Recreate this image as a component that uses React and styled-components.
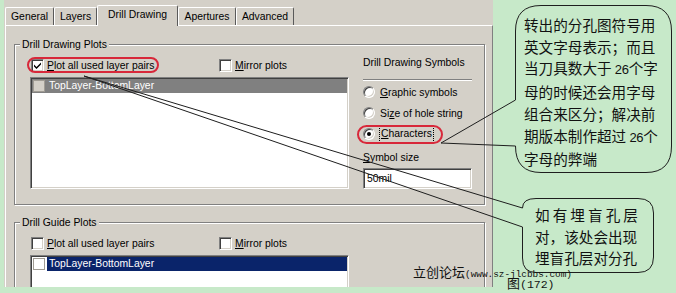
import React from 'react';
import styled, { createGlobalStyle } from 'styled-components';

const UI = `'Liberation Sans', Arial, sans-serif`;
const CJK = `'Noto Sans CJK SC', 'Noto Sans', sans-serif`;
const MONO = `'Liberation Mono', 'DejaVu Sans Mono', monospace`;

const Global = createGlobalStyle`
  html, body { margin: 0; padding: 0; background: #c7e9c9; }
  body { width: 676px; height: 293px; overflow: hidden; }
`;

const Stage = styled.div`
  position: relative;
  width: 676px;
  height: 293px;
  overflow: hidden;
  background: #c7e9c9;
  font-family: ${UI};
  font-size: 10.4px;
  color: #000;
`;

const Dialog = styled.div`
  margin-left: 4px;
  width: 489px;
  height: 287px;
  background: #d4d0c8;
  display: flex;
  flex-direction: column;
  overflow: hidden;
`;

const TabStrip = styled.div`
  display: flex;
  align-items: flex-end;
  height: 25px;
  padding-left: 1px;
  position: relative;
  z-index: 1;
  flex-shrink: 0;
`;

const Tab = styled.div`
  box-sizing: border-box;
  width: ${(p) => p.$w}px;
  height: ${(p) => (p.$active ? 21 : 18)}px;
  margin-bottom: ${(p) => (p.$active ? -1 : 0)}px;
  border-top: 1px solid #fff;
  border-left: 1px solid #fff;
  border-right: 1px solid #5a5a5a;
  border-radius: 2px 2px 0 0;
  background: #d4d0c8;
  display: flex;
  align-items: center;
  justify-content: center;
  padding-bottom: ${(p) => (p.$active ? 3 : 0)}px;
  white-space: nowrap;
`;

const TabBody = styled.div`
  flex: 1;
  margin-left: 1px;
  border-top: 1px solid #fff;
  border-left: 1px solid #fff;
  border-right: 1px solid #808080;
  padding: 18px 7px 0 8px;
`;

const Group = styled.div`
  position: relative;
  box-sizing: border-box;
  height: ${(p) => p.$h}px;
  margin-top: ${(p) => p.$mt || 0}px;
  border: 1px solid #808080;
  box-shadow: inset 1px 1px 0 #fff, 1px 1px 0 #fff;
  display: flex;
  align-items: flex-start;
  padding: 14px 0 0 15px;
`;

const Legend = styled.span`
  position: absolute;
  top: -7px;
  left: 5px;
  padding: 0 2px;
  line-height: 13px;
  background: #d4d0c8;
`;

const LeftCol = styled.div`
  width: 319px;
  display: flex;
  flex-direction: column;
`;

const CheckRow = styled.div`
  display: grid;
  grid-template-columns: 188px auto;
  height: 13px;
  margin-left: 1px;
`;

const CheckItem = styled.label`
  display: flex;
  align-items: center;
  gap: 3px;
  line-height: 13px;
  white-space: nowrap;
`;

const CheckBox = styled.span`
  box-sizing: border-box;
  width: 13px;
  height: 13px;
  flex-shrink: 0;
  background: #fff;
  border-style: solid;
  border-width: 1px;
  border-color: #808080 #fff #fff #808080;
  box-shadow: inset 1px 1px 0 #404040, inset -1px -1px 0 #d4d0c8;
  display: flex;
  align-items: center;
  justify-content: center;
`;

const Key = styled.span`
  text-decoration: underline;
  text-underline-offset: 1px;
`;

const ListBox = styled.div`
  box-sizing: border-box;
  height: ${(p) => p.$h}px;
  margin-top: 5px;
  background: #fff;
  border-style: solid;
  border-width: 1px;
  border-color: #808080 #fff #fff #808080;
  box-shadow: inset 1px 1px 0 #404040, inset -1px -1px 0 #d4d0c8;
  padding: 1px;
`;

const ListRow = styled.div`
  display: flex;
  align-items: center;
  height: 14px;
  background: ${(p) => (p.$full ? '#808080' : 'transparent')};
  padding-left: 1px;
`;

const ItemCheck = styled.span`
  box-sizing: border-box;
  width: 12px;
  height: 12px;
  flex-shrink: 0;
  border: 1px solid #a09c94;
  background: ${(p) => (p.$grey ? '#d4d0c8' : '#fff')};
`;

const ItemText = styled.span`
  flex: 1;
  height: 14px;
  line-height: 14px;
  margin-left: 2px;
  padding-left: 2px;
  color: #fff;
  background: ${(p) => p.$bg};
  white-space: nowrap;
`;

const RightCol = styled.div`
  width: 109px;
  margin-left: 14px;
  margin-top: -3px;
  display: flex;
  flex-direction: column;
`;

const ColTitle = styled.div`
  line-height: 13px;
  white-space: nowrap;
`;

const Separator = styled.div`
  height: 1px;
  margin-top: 10px;
  background: #808080;
  border-bottom: 1px solid #fff;
`;

const RadioList = styled.div`
  display: flex;
  flex-direction: column;
  gap: 5px;
  margin-top: 3px;
`;

const RadioItem = styled.label`
  display: flex;
  align-items: center;
  gap: 5px;
  height: 16px;
  white-space: nowrap;
`;

const Radio = styled.span`
  position: relative;
  box-sizing: border-box;
  width: 12px;
  height: 12px;
  flex-shrink: 0;
  border-radius: 50%;
  background: #fff;
  border-style: solid;
  border-width: 1px;
  border-color: #808080 #fff #fff #808080;
  box-shadow: inset 1px 1px 0 #404040, inset -1px -1px 0 #d4d0c8;
  &::after {
    content: '';
    display: ${(p) => (p.$on ? 'block' : 'none')};
    position: absolute;
    left: 3px;
    top: 3px;
    width: 4px;
    height: 4px;
    border-radius: 50%;
    background: #000;
  }
`;

const Focus = styled.span`
  margin-left: -1px;
  padding: 1px 1px 2px;
  border: 1px dotted #000;
  line-height: 12px;
`;

const FieldLabel = styled.div`
  margin-top: 9px;
  line-height: 13px;
`;

const TextInput = styled.div`
  box-sizing: border-box;
  height: 21px;
  margin-top: 4px;
  background: #fff;
  border-style: solid;
  border-width: 1px;
  border-color: #808080 #fff #fff #808080;
  box-shadow: inset 1px 1px 0 #404040, inset -1px -1px 0 #d4d0c8;
  padding: 0 3px;
  display: flex;
  align-items: center;
`;

const Overlay = styled.svg`
  position: absolute;
  left: 0;
  top: 0;
  pointer-events: none;
`;

const BubbleText = styled.div`
  position: absolute;
  left: ${(p) => p.$x}px;
  top: ${(p) => p.$y}px;
  width: ${(p) => p.$w}px;
  font-family: ${CJK};
  font-size: 14.6px;
  line-height: 21.7px;
  color: #111;
  white-space: nowrap;
`;

const Num = styled.span`
  font-family: ${UI};
  font-size: 13px;
  letter-spacing: -0.3px;
`;

const SpreadLine = styled.div`
  display: flex;
  justify-content: space-between;
`;

const Caption = styled.div`
  position: absolute;
  left: ${(p) => p.$x}px;
  top: ${(p) => p.$y}px;
  font-family: ${CJK};
  font-size: 13px;
  line-height: 11px;
  white-space: nowrap;
  color: #111;
`;

const Mono = styled.span`
  font-family: ${MONO};
  font-size: ${(p) => p.$s}px;
`;

const Tick = () => (
  <svg width="9" height="9" viewBox="0 0 9 9">
    <path d="M1 3.5 L3.5 6 L8 1.5 L8 3.5 L3.5 8 L1 5.5 Z" fill="#000" />
  </svg>
);

const tabs = [
  ['General', 49],
  ['Layers', 43],
  ['Drill Drawing', 81, true],
  ['Apertures', 58],
  ['Advanced', 58],
];

export default function App() {
  return (
    <Stage>
      <Global />
      <Dialog>
        <TabStrip>
          {tabs.map(([t, w, a]) => (
            <Tab key={t} $w={w} $active={a}>
              {t}
            </Tab>
          ))}
        </TabStrip>
        <TabBody>
          <Group $h={161}>
            <Legend>Drill Drawing Plots</Legend>
            <LeftCol>
              <CheckRow>
                <CheckItem>
                  <CheckBox>
                    <Tick />
                  </CheckBox>
                  <span>
                    <Key>P</Key>lot all used layer pairs
                  </span>
                </CheckItem>
                <CheckItem>
                  <CheckBox />
                  <span>
                    <Key>M</Key>irror plots
                  </span>
                </CheckItem>
              </CheckRow>
              <ListBox $h={112}>
                <ListRow $full>
                  <ItemCheck $grey />
                  <ItemText $bg="#808080">TopLayer-BottomLayer</ItemText>
                </ListRow>
              </ListBox>
            </LeftCol>
            <RightCol>
              <ColTitle>Drill Drawing Symbols</ColTitle>
              <Separator />
              <RadioList>
                <RadioItem>
                  <Radio />
                  <span>
                    <Key>G</Key>raphic symbols
                  </span>
                </RadioItem>
                <RadioItem>
                  <Radio />
                  <span>
                    Si<Key>z</Key>e of hole string
                  </span>
                </RadioItem>
                <RadioItem>
                  <Radio $on />
                  <Focus>
                    <Key>C</Key>haracters
                  </Focus>
                </RadioItem>
              </RadioList>
              <FieldLabel>
                <Key>S</Key>ymbol size
              </FieldLabel>
              <TextInput>50mil</TextInput>
            </RightCol>
          </Group>
          <Group $h={90} $mt={17}>
            <Legend>Drill Guide Plots</Legend>
            <LeftCol>
              <CheckRow>
                <CheckItem>
                  <CheckBox />
                  <span>
                    <Key>P</Key>lot all used layer pairs
                  </span>
                </CheckItem>
                <CheckItem>
                  <CheckBox />
                  <span>
                    <Key>M</Key>irror plots
                  </span>
                </CheckItem>
              </CheckRow>
              <ListBox $h={60}>
                <ListRow>
                  <ItemCheck />
                  <ItemText $bg="#0a246a">TopLayer-BottomLayer</ItemText>
                </ListRow>
              </ListBox>
            </LeftCol>
          </Group>
        </TabBody>
      </Dialog>

      <Overlay width="676" height="293" viewBox="0 0 676 293">
        <g fill="none" stroke="#d8283a" strokeWidth="2">
          <rect x="99" y="8" width="77" height="15" rx="7.5" />
          <rect x="28" y="58" width="130" height="14" rx="7" />
          <rect x="358" y="126" width="84" height="17" rx="8.5" />
        </g>
        <g fill="none" stroke="#1e1e1e" strokeWidth="1">
          <path d="M515.5 100 L515.5 31 Q515.5 5.5 541 5.5 L646 5.5 Q671.5 5.5 671.5 31 L671.5 146 Q671.5 172.5 646 172.5 L541 172.5 Q515.5 172.5 515.5 146 L441 143 Z" />
          <path d="M522.5 227 L84 76 L522.5 208 Q522.5 198.5 536 198.5 L638 198.5 Q653.5 198.5 653.5 213 L653.5 257 Q653.5 272.5 638 272.5 L536 272.5 Q522.5 272.5 522.5 258 Z" />
        </g>
      </Overlay>

      <BubbleText $x={524} $y={14} $w={140}>
        <div>转出的分孔图符号用</div>
        <div>英文字母表示；而且</div>
        <div>
          当刀具数大于 <Num>26</Num>个字
        </div>
        <div>母的时候还会用字母</div>
        <div>组合来区分；解决前</div>
        <div>
          期版本制作超过 <Num>26</Num>个
        </div>
        <div>字母的弊端</div>
      </BubbleText>

      <BubbleText $x={535} $y={204} $w={103}>
        <SpreadLine>
          {['如', '有', '埋', '盲', '孔', '层'].map((c) => (
            <span key={c}>{c}</span>
          ))}
        </SpreadLine>
        <div>对，该处会出现</div>
        <div>埋盲孔层对分孔</div>
      </BubbleText>

      <Caption $x={413} $y={266}>
        立创论坛<Mono $s={9.4}>(www.sz-jlcbbs.com)</Mono>
      </Caption>
      <Caption $x={507} $y={277}>
        图<Mono $s={11.5}>(172)</Mono>
      </Caption>
    </Stage>
  );
}
